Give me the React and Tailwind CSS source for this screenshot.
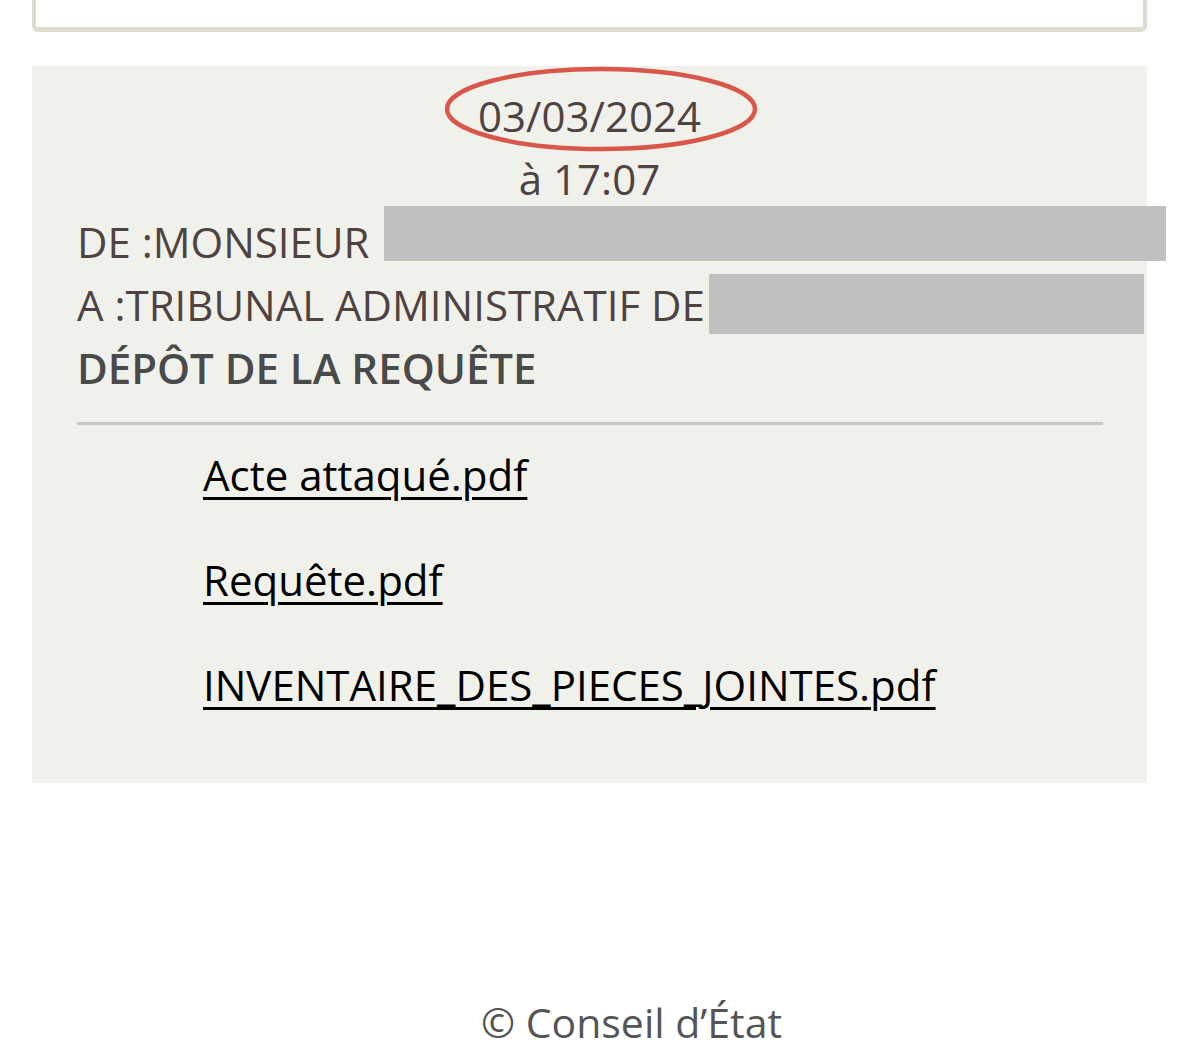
import React from 'react';

const files = ['Acte attaqué.pdf', 'Requête.pdf', 'INVENTAIRE_DES_PIECES_JOINTES.pdf'];

const App = () => (
  <div className="w-[1179px] h-[1056px] bg-white overflow-hidden relative font-['Open_Sans',sans-serif]">
    {/* card above, cut off at top */}
    <div className="mx-[32px] -mt-[20px] h-[52px] border-x-[4px] border-b-[5px] border-[#dedbd0] rounded-b-[6px] bg-white" />

    <div className="mx-[32px] mt-[34px] bg-[#f1f1ec] pt-[18px] pb-[67px] pl-[45px] pr-[45px]">
      <div className="flex flex-col items-center text-[42px] leading-[63px] text-[#4f4341]">
        <div className="relative">
          <span>03/03/2024</span>
          <svg className="absolute left-[-35px] top-[-19px]" width="316" height="88" viewBox="0 0 316 88">
            <ellipse cx="158" cy="44" rx="154" ry="40" fill="none" stroke="#d9574a" strokeWidth="4.5" />
          </svg>
        </div>
        <div>à 17:07</div>
      </div>

      <div className="text-[42px] leading-[63px] text-[#4f4341]">
        <div className="flex items-start">
          <span className="whitespace-pre">DE :MONSIEUR </span>
          <span className="-mt-[4px] ml-[4px] h-[55px] w-[782px] -mr-[64px] bg-[#c0c0c0] shrink-0" />
        </div>
        <div className="flex items-start">
          <span className="whitespace-pre">A :TRIBUNAL ADMINISTRATIF DE </span>
          <span className="mt-[1px] -ml-[7px] h-[60px] w-[435px] bg-[#c0c0c0] shrink-0" />
        </div>
        <div className="font-semibold text-[#4a4a4a]">DÉPÔT DE LA REQUÊTE</div>
      </div>

      <div className="mt-[23px] h-[3px] w-[1026px] bg-[#c9c7c1]" />

      <div className="pl-[126px] pt-[18px] flex flex-col gap-[42px]">
        {files.map((f) => (
          <a key={f} href="#" className="text-[42px] leading-[63px] text-black underline underline-offset-[6px] decoration-[3px]">
            {f}
          </a>
        ))}
      </div>
    </div>

    <div className="absolute left-0 right-0 top-[996px] text-center pl-[84px] text-[41px] leading-[52px] text-[#555555]">
      © Conseil d’État
    </div>
  </div>
);

export default App;
